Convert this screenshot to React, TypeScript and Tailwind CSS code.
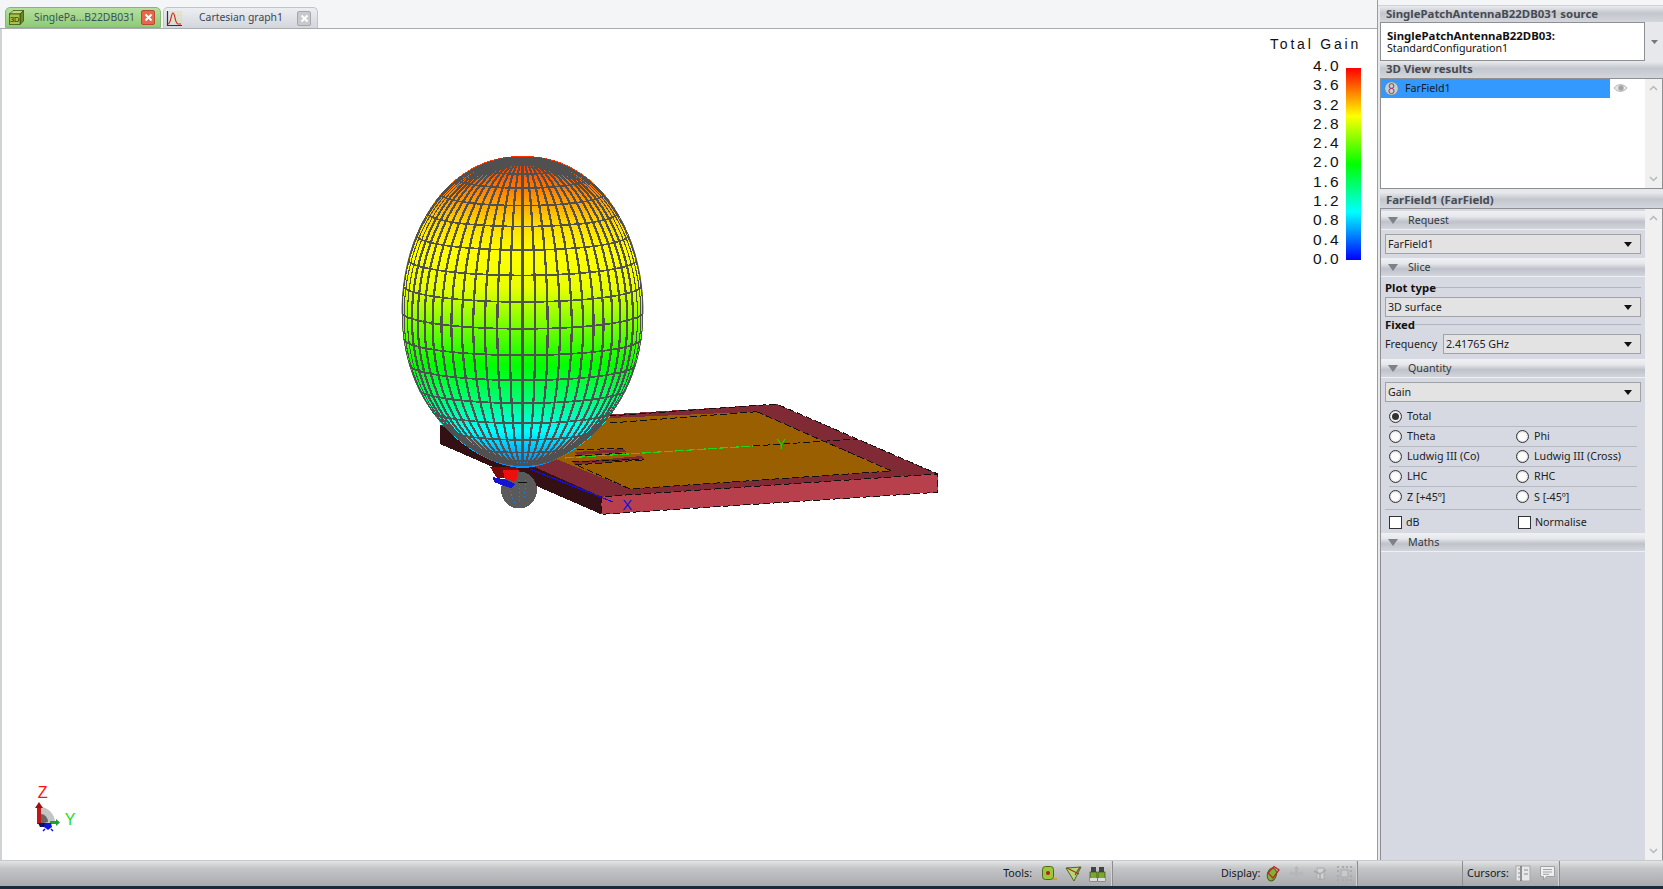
import React from "react";

const FONT = { fontFamily: '"Noto Sans", "Open Sans", sans-serif' };

const cx = 522.5, cy = 312, A = 121, B = 155;
const T = (8 * Math.PI) / 180;
const rad = (d: number) => (d * Math.PI) / 180;
const bulge = (s: number, c: number) => {
  const p = c > 0 ? 0.92 : 1 + 0.15 * Math.abs(c);
  return Math.sign(s) * Math.pow(Math.abs(s), p);
};

function proj(thDeg: number, phDeg: number) {
  const th = rad(thDeg), ph = rad(phDeg);
  const r = A * bulge(Math.sin(th), Math.cos(th));
  const x = r * Math.cos(ph);
  const y = r * Math.sin(ph);
  const z = B * Math.cos(th);
  const vis = (y / (A * A)) * Math.cos(T) + (z / (B * B)) * Math.sin(T) > -0.00002;
  return { X: cx + x, Y: cy - z * Math.cos(T) + y * Math.sin(T), vis };
}

function visibleSegments(samples: { X: number; Y: number; vis: boolean }[]) {
  const out: string[] = [];
  let cur: string[] = [];
  for (const p of samples) {
    if (p.vis) cur.push(`${p.X.toFixed(1)},${p.Y.toFixed(1)}`);
    else {
      if (cur.length > 1) out.push(cur.join(" "));
      cur = [];
    }
  }
  if (cur.length > 1) out.push(cur.join(" "));
  return out;
}

function buildGrid() {
  const lines: { pts: string; w: number }[] = [];
  for (let ph = 0; ph < 360; ph += 6) {
    const s = [];
    for (let th = 0; th <= 180; th += 3) s.push(proj(th, ph));
    const w = Math.abs(Math.sin(rad(ph))) > 0.4 ? 2.2 : 1.1;
    visibleSegments(s).forEach((pts) => lines.push({ pts, w }));
  }
  for (let th = 10; th < 180; th += 10) {
    const s = [];
    for (let ph = 0; ph <= 360; ph += 3) s.push(proj(th, ph));
    visibleSegments(s).forEach((pts) => lines.push({ pts, w: 1.7 }));
  }
  return lines;
}

function eggPath() {
  const pts: string[] = [];
  for (let s = 0; s <= 360; s += 4) {
    const r = rad(s);
    pts.push(`${(cx + A * bulge(Math.sin(r), Math.cos(r))).toFixed(1)} ${(cy - 156 * Math.cos(r)).toFixed(1)}`);
  }
  return "M" + pts.join("L") + "Z";
}

function Scene() {
  const grid = buildGrid();
  const egg = eggPath();
  return (
    <svg width="1378" height="831" viewBox="0 29 1378 831" className="block" shapeRendering="crispEdges">
      <defs>
        <linearGradient id="gain" gradientUnits="userSpaceOnUse" x1="0" y1="156" x2="0" y2="468">
          <stop offset="0.01" stopColor="#ff3000" />
          <stop offset="0.11" stopColor="#ff8000" />
          <stop offset="0.22" stopColor="#ffdd00" />
          <stop offset="0.31" stopColor="#ffff00" />
          <stop offset="0.42" stopColor="#eaff00" />
          <stop offset="0.67" stopColor="#00ff00" />
          <stop offset="0.79" stopColor="#00ff80" />
          <stop offset="0.88" stopColor="#00ffff" />
          <stop offset="0.98" stopColor="#0090ff" />
        </linearGradient>
        <clipPath id="eggclip">
          <path d={egg} />
        </clipPath>
      </defs>

      {/* patch antenna */}
      <polygon points="440,425 601.3,496.7 601.3,514.3 440,444" fill="#331014" />
      <polygon points="601.3,496.7 937.7,474 937.7,492.3 601.3,514.3" fill="#b8404c" />
      <polygon points="440,425 776.7,404 937.7,474 601.3,496.7" fill="#7f2a35" />
      <polygon points="470,424 756.7,411.7 891.7,471 630,489" fill="#995f00" />
      <polygon points="575,452 623,449 627,452 577,455" fill="#7f2a35" />
      <polygon points="572,462 642,456 644,459 575,465" fill="#7f2a35" />
      <path d="M609 416 L776.7 404 L937.7 474 L937.7 492.3 L601.3 514.3 L601.3 496.7 L937.7 474 M756.7 411.7 L891.7 471 L630 489 L575 464.3 M756.7 411.7 L610 423 M753 446 L857 439 M577 450 L623 448 M575 456 L627 453 M572 462 L644 459 M575 465 L642 460" fill="none" stroke="#111" strokeWidth="1" strokeDasharray="7 3" />
      <path d="M565 458 L753 446" stroke="#18d818" strokeWidth="1.2" strokeDasharray="9 2" fill="none" />
      <path d="M530 469 L613 502" stroke="#1010e0" strokeWidth="1.2" />
      <text x="627.3" y="510" fontSize="15" fill="#1010e0" fontFamily="Liberation Sans" textAnchor="middle">X</text>
      <text x="781.7" y="449" fontSize="15" fill="#00d000" fontFamily="Liberation Sans" textAnchor="middle">Y</text>

      {/* back lobe */}
      <ellipse cx="519" cy="490" rx="18" ry="18.5" fill="#5a5a5a" />
      <path d="M508 483 L515 505 M520 480 L519 503 M526 480 L524 500" stroke="#2a80e0" strokeWidth="1" strokeDasharray="1 3" />
      <path d="M490 467 L518 467 L516 479 L497 478 Z" fill="#7b0a0a" />
      <path d="M503 470 L519 470 L516 481 L505 480 Z" fill="#ee0e0e" />
      <path d="M493 477 L507 480 L515 484 L511 488 L504 486 L494 482 Z" fill="#1414d0" />
      <path d="M518 482 L527 482" stroke="#111" strokeWidth="1" />

      {/* radiation pattern */}
      <path d={egg} fill="url(#gain)" />
      <g clipPath="url(#eggclip)" fill="none" stroke="#505050">
        {grid.map((l, i) => (
          <polyline key={i} points={l.pts} strokeWidth={l.w} />
        ))}
      </g>
    </svg>
  );
}

function Axes() {
  return (
    <svg width="70" height="60" viewBox="0 0 70 60" className="block">
      <text x="22.7" y="23" fontSize="16" fill="#ff1010" fontFamily="Liberation Sans" textAnchor="middle">Z</text>
      <text x="50" y="50" fontSize="16" fill="#20e020" fontFamily="Liberation Sans" textAnchor="middle">Y</text>
      <path d="M20 32 A15 16 0 0 1 35 48 L22 50 Z" fill="#c4c4c4" />
      <path d="M20 39 A7 8 0 0 1 28 47 L20 49 Z" fill="#666" />
      <path d="M17 32 L21 32 L21 49 L17 49 Z" fill="#c01818" />
      <path d="M15 33 L19 27 L23 33 Z" fill="#a01010" />
      <path d="M30 46 L36 46 L36 49 L30 49 Z" fill="#20a030" />
      <path d="M36 44 L40 47.5 L36 51 Z" fill="#20a030" />
      <path d="M18 48 L28 48 L28 52 L20 52 Z" fill="#101060" />
      <path d="M25 48 L31 48 L32 52 L28 55 L24 52 Z" fill="#1414e0" />
      <path d="M25 54 L23 56 M31 54 L33 56" stroke="#1414e0" strokeWidth="1.5" />
    </svg>
  );
}

function Cube() {
  return (
    <svg width="17" height="17" viewBox="0 0 17 17">
      <path d="M1.5 5 L5 1.5 L15.5 1.5 L12 5 Z" fill="#c4d67a" stroke="#32420c" strokeWidth="0.7" />
      <path d="M12 5 L15.5 1.5 L15.5 12 L12 15.5 Z" fill="#6d8a1d" stroke="#32420c" strokeWidth="0.7" />
      <rect x="1.5" y="5" width="10.5" height="10.5" fill="#a9c24b" stroke="#32420c" strokeWidth="0.7" />
      <text x="6.7" y="13" fontSize="7.5" textAnchor="middle" fill="#1d2a05" fontFamily="Liberation Sans">3D</text>
    </svg>
  );
}

function GraphIcon() {
  return (
    <svg width="17" height="17" viewBox="0 0 17 17">
      <path d="M3 2 H16 M3 5 H16 M3 8 H16 M3 11 H16 M6 1 V14 M9 1 V14 M12 1 V14 M15 1 V14" stroke="#d8e0a8" strokeWidth="0.7" />
      <path d="M1.5 1 V15.5 H16" fill="none" stroke="#333" strokeWidth="1.2" />
      <path d="M2 14 C5 14 5 3 7 3 C9 3 9 14 12 14 H15" fill="none" stroke="#d02020" strokeWidth="1.1" />
    </svg>
  );
}

function CloseBtn({ active }: { active?: boolean }) {
  return (
    <span
      className={
        "w-[14px] h-[15px] flex items-center justify-center rounded-[2px] border " +
        (active ? "bg-[#e8664a] border-[#b9492f]" : "bg-[#c7c9cc] border-[#a4a6a9]")
      }
    >
      <svg width="9" height="9" viewBox="0 0 9 9">
        <path d="M1.5 1.5 L7.5 7.5 M7.5 1.5 L1.5 7.5" stroke="#fff" strokeWidth="2" />
      </svg>
    </span>
  );
}

function TabBar() {
  return (
    <div className="h-[29px] shrink-0 flex items-end pl-[5px] gap-[2px] bg-[#f4f5f7] border-b border-[#a8abb2]" style={FONT}>
      <div className="w-[156px] h-[21px] flex items-center pl-[2px] pr-[5px] rounded-t-[5px] border border-[#87b872] bg-[linear-gradient(#b5e09e,#8ecb74)] text-[10.4px] text-[#39505f]">
        <Cube />
        <span className="ml-[9px] flex-1 whitespace-nowrap">SinglePa...B22DB031</span>
        <CloseBtn active />
      </div>
      <div className="w-[155px] h-[21px] flex items-center pl-[2px] pr-[6px] rounded-t-[5px] border border-[#c0c3c9] border-b-0 bg-[linear-gradient(#eceef1,#d3d6dc)] text-[10.4px] text-[#3c4654]">
        <GraphIcon />
        <span className="ml-[16px] flex-1 whitespace-nowrap">Cartesian graph1</span>
        <CloseBtn />
      </div>
    </div>
  );
}

const LEGEND = ["4.0", "3.6", "3.2", "2.8", "2.4", "2.0", "1.6", "1.2", "0.8", "0.4", "0.0"];

function Legend() {
  return (
    <div className="absolute left-[1270px] top-[5px] w-[95px]" style={{ fontFamily: '"Liberation Sans", sans-serif' }}>
      <div className="text-[14px] leading-[16px] tracking-[2.8px] text-[#111] whitespace-nowrap h-[24px] pt-[2px] -ml-[2px]">Total Gain</div>
      <div className="flex">
        <div className="w-[74px] pl-[43px] flex flex-col -mt-[2px]">
          {LEGEND.map((v) => (
            <div key={v} className="h-[19.3px] leading-[19px] text-[15.5px] tracking-[2px] text-[#111] -ml-[2px] whitespace-nowrap">
              {v}
            </div>
          ))}
        </div>
        <div className="w-[15px] h-[192px] mt-[10px] bg-[linear-gradient(#ff0000,#ffff00_25%,#00ff00_50%,#00ffff_75%,#0000ff)]" />
      </div>
    </div>
  );
}

const HEAD = "bg-[linear-gradient(#e9ebef,#c3c6cd_45%,#d3d6dc)]";

function PanelHead({ children, className = "" }: { children: React.ReactNode; className?: string }) {
  return (
    <div className={"pl-[6px] text-[11.4px] font-bold text-[#464b52] flex items-center whitespace-nowrap " + HEAD + " " + className}>
      {children}
    </div>
  );
}

function Section({ title, h = "h-[19px]" }: { title: string; h?: string }) {
  return (
    <div className={h + " flex items-center text-[10.7px] text-[#33393f] border-b border-[#eef0f3] bg-[linear-gradient(#f0f1f4,#e6e8ec_30%,#bfc2ca_60%,#d2d5dc)]"}>
      <svg width="10" height="7" viewBox="0 0 10 7" className="ml-[7px]">
        <path d="M0 0 H10 L5 7 Z" fill="#7d8188" />
      </svg>
      <span className="ml-[10px]">{title}</span>
    </div>
  );
}

function Select({ text, className = "" }: { text: string; className?: string }) {
  return (
    <div className={"h-[20px] flex items-center bg-[#e3e3e3] border border-[#a0a2a6] pl-[2px] pr-[8px] text-[10.7px] text-[#1d2126] " + className}>
      <span className="flex-1">{text}</span>
      <svg width="8" height="5" viewBox="0 0 8 5">
        <path d="M0 0 H8 L4 5 Z" fill="#111" />
      </svg>
    </div>
  );
}

function Radio({ label, checked, wide }: { label: string; checked?: boolean; wide?: boolean }) {
  return (
    <div className={(wide ? "w-[127px] shrink-0" : "") + " flex items-center text-[10.7px] text-[#1d2126] whitespace-nowrap"}>
      <span className="w-[13px] h-[13px] rounded-full border border-[#333] bg-white flex items-center justify-center shadow-[inset_0_0_2px_#999]">
        {checked && <span className="w-[7px] h-[7px] rounded-full bg-[#333]" />}
      </span>
      <span className="ml-[5px]">{label}</span>
    </div>
  );
}

function RadioRow({ a, b, checked, line = true }: { a: string; b?: string; checked?: boolean; line?: boolean }) {
  return (
    <div className={"h-[20px] flex items-center ml-[8px] mr-[8px] " + (line ? "border-b border-[#b7bac1]" : "")}>
      <Radio label={a} checked={checked} wide />
      {b && <Radio label={b} />}
    </div>
  );
}

function Labeled({ text }: { text: string }) {
  return (
    <div className="flex items-center pl-[4px] pr-[4px] pb-[2px] text-[11.4px] font-bold text-[#111] h-[15px]">
      <span>{text}</span>
      <span className="flex-1 h-px bg-[#b3b6bd]" />
    </div>
  );
}

function ScrollBar() {
  return (
    <div className="w-[17px] shrink-0 bg-[#f0f0f0] flex flex-col justify-between items-center py-[6px]">
      <svg width="9" height="6" viewBox="0 0 9 6"><path d="M1 5 L4.5 1.5 L8 5" fill="none" stroke="#b8b8b8" strokeWidth="1.5" /></svg>
      <svg width="9" height="6" viewBox="0 0 9 6"><path d="M1 1 L4.5 4.5 L8 1" fill="none" stroke="#b8b8b8" strokeWidth="1.5" /></svg>
    </div>
  );
}

function FarIcon() {
  return (
    <svg width="15" height="15" viewBox="0 0 15 15">
      <circle cx="7.5" cy="7.5" r="6.8" fill="#bcd2d8" stroke="#6c8088" strokeWidth="0.8" />
      <circle cx="7.5" cy="5" r="2.4" fill="none" stroke="#a8324a" strokeWidth="1" />
      <circle cx="7.5" cy="10" r="2.6" fill="none" stroke="#a8324a" strokeWidth="1" />
    </svg>
  );
}

function Eye() {
  return (
    <svg width="15" height="10" viewBox="0 0 15 10">
      <path d="M1 5 C4 0.5 11 0.5 14 5 C11 9.5 4 9.5 1 5 Z" fill="#e6e6e6" stroke="#b4b4b4" />
      <circle cx="8" cy="5" r="2.7" fill="#a4a4a4" />
    </svg>
  );
}

function RightPanel() {
  return (
    <div className="w-[285px] shrink-0 bg-[#e6e8ec] flex flex-col" style={FONT}>
      <div className="h-[6px] bg-[#f4f5f7] border-b border-[#cfd1d6]" />
      <PanelHead className="h-[16px] ml-[2px]">SinglePatchAntennaB22DB031 source</PanelHead>
      <div className="h-[39px] flex ml-[2px]">
        <div className="w-[265px] bg-white border border-[#8d8f93] pl-[6px] pt-[6px] text-[11px] leading-[13px] text-[#111] whitespace-nowrap">
          <div className="font-bold text-[11.4px]">SinglePatchAntennaB22DB03:</div>
          <div className="text-[10.7px]">StandardConfiguration1</div>
        </div>
        <div className="flex-1 flex items-center justify-center">
          <svg width="7" height="4" viewBox="0 0 7 4"><path d="M0 0 H7 L3.5 4 Z" fill="#777" /></svg>
        </div>
      </div>
      <PanelHead className="h-[17px] ml-[2px] pb-[2px]">3D View results</PanelHead>
      <div className="h-[111px] flex ml-[2px] bg-white border border-[#8d8f93]">
        <div className="flex-1 flex items-start">
          <div className="w-[229px] h-[19px] bg-[#3399ff] flex items-center pl-[3px] text-[10.7px] text-[#10202e]">
            <FarIcon />
            <span className="ml-[6px]">FarField1</span>
          </div>
          <div className="ml-[3px] mt-[4px]"><Eye /></div>
        </div>
        <ScrollBar />
      </div>
      <div className="h-[3px]" />
      <PanelHead className="h-[16px] ml-[2px]">FarField1 (FarField)</PanelHead>
      <div className="flex-1 flex ml-[2px] bg-[#d6d9e1] border border-[#8d8f93] border-b-0 min-w-0">
        <div className="flex-1 flex flex-col min-w-0">
          <div className="h-[2px]" />
          <Section title="Request" />
          <Select text="FarField1" className="mx-[4px] mt-[4px]" />
          <div className="h-[4px]" />
          <Section title="Slice" />
          <div className="h-[4px]" />
          <Labeled text="Plot type" />
          <Select text="3D surface" className="mx-[4px] mt-[1px]" />
          <div className="h-[1px]" />
          <Labeled text="Fixed" />
          <div className="flex items-center pl-[4px] pr-[4px] mt-[1px] text-[10.7px] text-[#1d2126]">
            <span className="w-[58px]">Frequency</span>
            <Select text="2.41765 GHz" className="flex-1" />
          </div>
          <div className="h-[5px]" />
          <Section title="Quantity" />
          <Select text="Gain" className="mx-[4px] mt-[4px]" />
          <div className="h-[5px]" />
          <RadioRow a="Total" checked />
          <RadioRow a="Theta" b="Phi" />
          <RadioRow a="Ludwig III (Co)" b="Ludwig III (Cross)" />
          <RadioRow a="LHC" b="RHC" />
          <RadioRow a="Z [+45º]" b="S [-45º]" line={false} />
          <div className="h-[3px] border-b border-[#b3b6bd] mx-[4px]" />
          <div className="h-[23px] flex items-center pt-[2px] pl-[8px] text-[10.7px] text-[#1d2126]">
            <div className="w-[129px] flex items-center">
              <span className="w-[13px] h-[13px] border border-[#333] bg-white" />
              <span className="ml-[4px]">dB</span>
            </div>
            <span className="w-[13px] h-[13px] border border-[#333] bg-white" />
            <span className="ml-[4px]">Normalise</span>
          </div>
          <Section title="Maths" />
        </div>
        <ScrollBar />
      </div>
    </div>
  );
}

function ToolIcon({ kind }: { kind: number }) {
  const g = "#7aa82a";
  return (
    <svg width="17" height="17" viewBox="0 0 17 17">
      {kind === 0 && (
        <>
          <rect x="1.5" y="1.5" width="11" height="13" rx="3" fill="#9cc63c" stroke="#4d6a14" />
          <circle cx="7" cy="8" r="2" fill="#b02020" />
          <path d="M12 14 H16" stroke="#d0a030" strokeWidth="2" />
        </>
      )}
      {kind === 1 && (
        <>
          <path d="M1 3 L16 2 L9 16 Z" fill="#b5d878" stroke="#4d6a14" />
          <path d="M2 3 L14 9 M10 10 L15 2" stroke="#a03030" strokeWidth="1.2" />
        </>
      )}
      {kind === 2 && (
        <>
          <rect x="2" y="2" width="5" height="6" fill="#444" />
          <rect x="10" y="2" width="5" height="6" fill="#444" />
          <rect x="1" y="7" width="7" height="9" fill={g} stroke="#333" strokeWidth="0.6" />
          <rect x="9" y="7" width="7" height="9" fill={g} stroke="#333" strokeWidth="0.6" />
          <rect x="1" y="13" width="7" height="3" fill="#ddd" />
          <rect x="9" y="13" width="7" height="3" fill="#ddd" />
        </>
      )}
      {kind === 3 && (
        <>
          <ellipse cx="8" cy="9.5" rx="4.5" ry="6.5" fill="#7fb23a" stroke="#3f6414" transform="rotate(15 8 9)" />
          <path d="M4 8 L10 1.5 L15 5 L9 13 Z" fill="none" stroke="#d02020" strokeWidth="1.3" />
        </>
      )}
      {kind === 4 && (
        <path d="M8.5 1 L11 4 H9.7 V7.3 H13 V6 L16 8.5 L13 11 V9.7 H9.7 V13 H11 L8.5 16 L6 13 H7.3 V9.7 H4 V11 L1 8.5 L4 6 V7.3 H7.3 V4 H6 Z" fill="#b4b6b8" />
      )}
      {kind === 5 && (
        <>
          <path d="M5 3 H12 V14 H5 Z" fill="#d0d2d4" stroke="#aaa" />
          <path d="M2 6 L8 9 L14 5 M8 9 V15" stroke="#a4a6a8" strokeWidth="1.5" fill="none" />
        </>
      )}
      {kind === 6 && (
        <>
          <rect x="5" y="5" width="7" height="7" fill="#c8cacc" stroke="#a8aaac" />
          <path d="M1 2 H3 M6 2 H8 M10 2 H12 M14 2 H16 M1 15 H3 M6 15 H8 M10 15 H12 M14 15 H16 M2 5 V7 M2 10 V12 M15 5 V7 M15 10 V12" stroke="#a8aaac" strokeWidth="2" />
        </>
      )}
      {kind === 7 && (
        <>
          <rect x="1" y="1" width="14" height="15" fill="#e7e8e9" stroke="#a8aaac" />
          <path d="M6 1 V16" stroke="#555" strokeWidth="1.2" />
          <path d="M3 4 H5 M3 8 H5 M3 12 H5 M9 5 H13 M9 9 H13" stroke="#8b8d8f" />
        </>
      )}
      {kind === 8 && (
        <>
          <path d="M1.5 1.5 H15.5 V11.5 H7.5 L4.5 15 V11.5 H1.5 Z" fill="#eeeeef" stroke="#a0a2a4" />
          <path d="M4 4.5 H13 M4 7 H13 M4 9.3 H10" stroke="#a0a2a4" />
        </>
      )}
    </svg>
  );
}

function StatusBar() {
  const sep = "border-r border-[#d2d3d5] shadow-[1px_0_0_#8c8d90]";
  return (
    <div className="shrink-0 flex flex-col" style={FONT}>
      <div className="h-[26px] flex items-stretch justify-end pr-[104px] border-t border-[#c9cacc] bg-[linear-gradient(#e2e3e4,#c4c5c7_30%,#a9aaad)] text-[10.7px] text-[#16191c]">
        <div className={"flex items-center w-[111px] justify-end pr-[5px] gap-[7px] " + sep}>
          <span className="mr-[2px]">Tools:</span>
          <ToolIcon kind={0} />
          <ToolIcon kind={1} />
          <ToolIcon kind={2} />
        </div>
        <div className="w-[105px]" />
        <div className={"flex items-center w-[140px] pl-[4px] gap-[7px] " + sep}>
          <span className="w-[36px] whitespace-nowrap">Display:</span>
          <ToolIcon kind={3} />
          <ToolIcon kind={4} />
          <ToolIcon kind={5} />
          <ToolIcon kind={6} />
        </div>
        <div className="w-[106px] border-r border-[#8c8d90]" />
        <div className={"flex items-center w-[96px] pl-[4px] gap-[7px] " + sep}>
          <span className="w-[41px] whitespace-nowrap">Cursors:</span>
          <ToolIcon kind={7} />
          <ToolIcon kind={8} />
        </div>
      </div>
      <div className="h-[3px] bg-[#1c2b39]" />
    </div>
  );
}

export default function App() {
  return (
    <div className="w-[1663px] h-[889px] overflow-hidden flex flex-col bg-white">
      <div className="flex-1 flex min-h-0">
        <div className="w-[1378px] flex flex-col border-r border-[#9a9ca0]">
          <TabBar />
          <div className="relative flex-1 min-h-0 bg-white border-l-2 border-[#d0d2d6]">
            <div className="-ml-[2px]">
              <Scene />
            </div>
            <Legend />
            <div className="absolute left-[18px] top-[746px]">
              <Axes />
            </div>
          </div>
        </div>
        <RightPanel />
      </div>
      <StatusBar />
    </div>
  );
}
